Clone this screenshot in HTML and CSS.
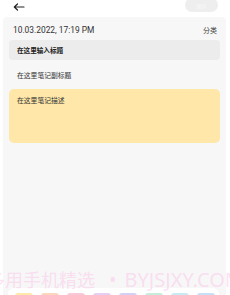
FILE: index.html
```html
<!DOCTYPE html>
<html>
<head>
<meta charset="utf-8">
<link rel="stylesheet" href="styles.css">
</head>
<body>
<div class="app">
  <header class="topbar">
    <svg class="back" width="12" height="8" viewBox="0 0 12 8"><path d="M11 4H1.5M4.5 1L1.3 4l3.2 3" fill="none" stroke="#222" stroke-width="1.2" stroke-linecap="round" stroke-linejoin="round"/></svg>
    <button class="save">保存</button>
  </header>
  <main class="panel">
    <div class="meta">
      <span class="date">10.03.2022, 17:19 PM</span>
      <span class="cat">分类</span>
    </div>
    <div class="title-box">在这里输入标题</div>
    <div class="subtitle">在这里笔记副标题</div>
    <div class="desc">在这里笔记描述</div>
    <div class="spacer"></div>
    <div class="palette">
      <span class="sw c1"></span><span class="sw c2"></span><span class="sw c3"></span><span class="sw c4"></span><span class="sw c5"></span><span class="sw c6"></span><span class="sw c7"></span><span class="sw c8"></span>
    </div>
  </main>
  <div class="watermark"><span>多用手机精选</span><span class="wm-dot">•</span><span class="wm-latin">BYJSJXY.COM</span></div>
</div>
</body>
</html>
```
FILE: styles.css
```css
* { box-sizing: border-box; }
html, body { margin: 0; padding: 0; background: #fff; }
body { font-family: Roboto, "Noto Sans CJK SC", sans-serif; color: #222; }
.app { position: relative; width: 230px; height: 295px; overflow: hidden; display: flex; flex-direction: column; }
.topbar { height: 17px; display: flex; align-items: flex-start; justify-content: space-between; padding: 0 12px 0 13px; }
.back { margin-top: 3px; }
.save { margin-top: -2px; width: 33px; height: 14px; border: none; border-radius: 7px; background: #eeeeee; color: #fafafa; font-size: 5px; font-family: "Noto Sans CJK SC", sans-serif; padding: 0; }
.panel { flex: 1; margin: 0 4px 0 3px; background: #f7f7f7; border-radius: 4px 4px 0 0; display: flex; flex-direction: column; padding: 7px 6px 0 6px; }
.meta { display: flex; justify-content: space-between; align-items: center; height: 12px; padding: 0 3px 0 4px; font-size: 8.4px; color: #333; }
.cat { font-family: "Noto Sans CJK SC", sans-serif; font-size: 7px; color: #444; }
.title-box { margin-top: 4px; height: 20px; background: #ececec; border-radius: 4px; padding: 0 8px; display: flex; align-items: center; font-family: "Noto Sans CJK SC", sans-serif; font-size: 6.6px; font-weight: 700; color: #222; }
.subtitle { height: 29px; display: flex; align-items: center; padding: 0 8px; font-family: "Noto Sans CJK SC", sans-serif; font-size: 6.8px; color: #333; }
.desc { height: 54px; background: #fee7a8; border-radius: 5px; padding: 6px 8px; font-family: "Noto Sans CJK SC", sans-serif; font-size: 6.8px; color: #333; line-height: 10px; }
.spacer { flex: 1; }
.palette { height: 7px; background: #fff; border-radius: 6px 6px 0 0; margin: 0 1px 0 -1px; display: flex; gap: 8px; padding: 5px 0 0 7px; }
.sw { width: 18px; height: 4px; border-radius: 3px 3px 0 0; }
.c1 { background: #fde9a9; }
.c2 { background: #fcd5bd; }
.c3 { background: #f9c8d6; }
.c4 { background: #e6cdf2; }
.c5 { background: #d3cff5; }
.c6 { background: #c6ecdc; }
.c7 { background: #c6ebf2; }
.c8 { background: #c7def6; }
.watermark { position: absolute; left: -13px; top: 266px; white-space: nowrap; font-family: "Noto Sans CJK SC", sans-serif; font-size: 18px; color: rgba(250, 190, 230, 0.45); pointer-events: none; }
.wm-dot { font-family: "Noto Sans", sans-serif; font-size: 20px; margin: 0 8px 0 14px; }
.wm-latin { font-family: "Noto Sans", sans-serif; font-size: 20px; }
```
